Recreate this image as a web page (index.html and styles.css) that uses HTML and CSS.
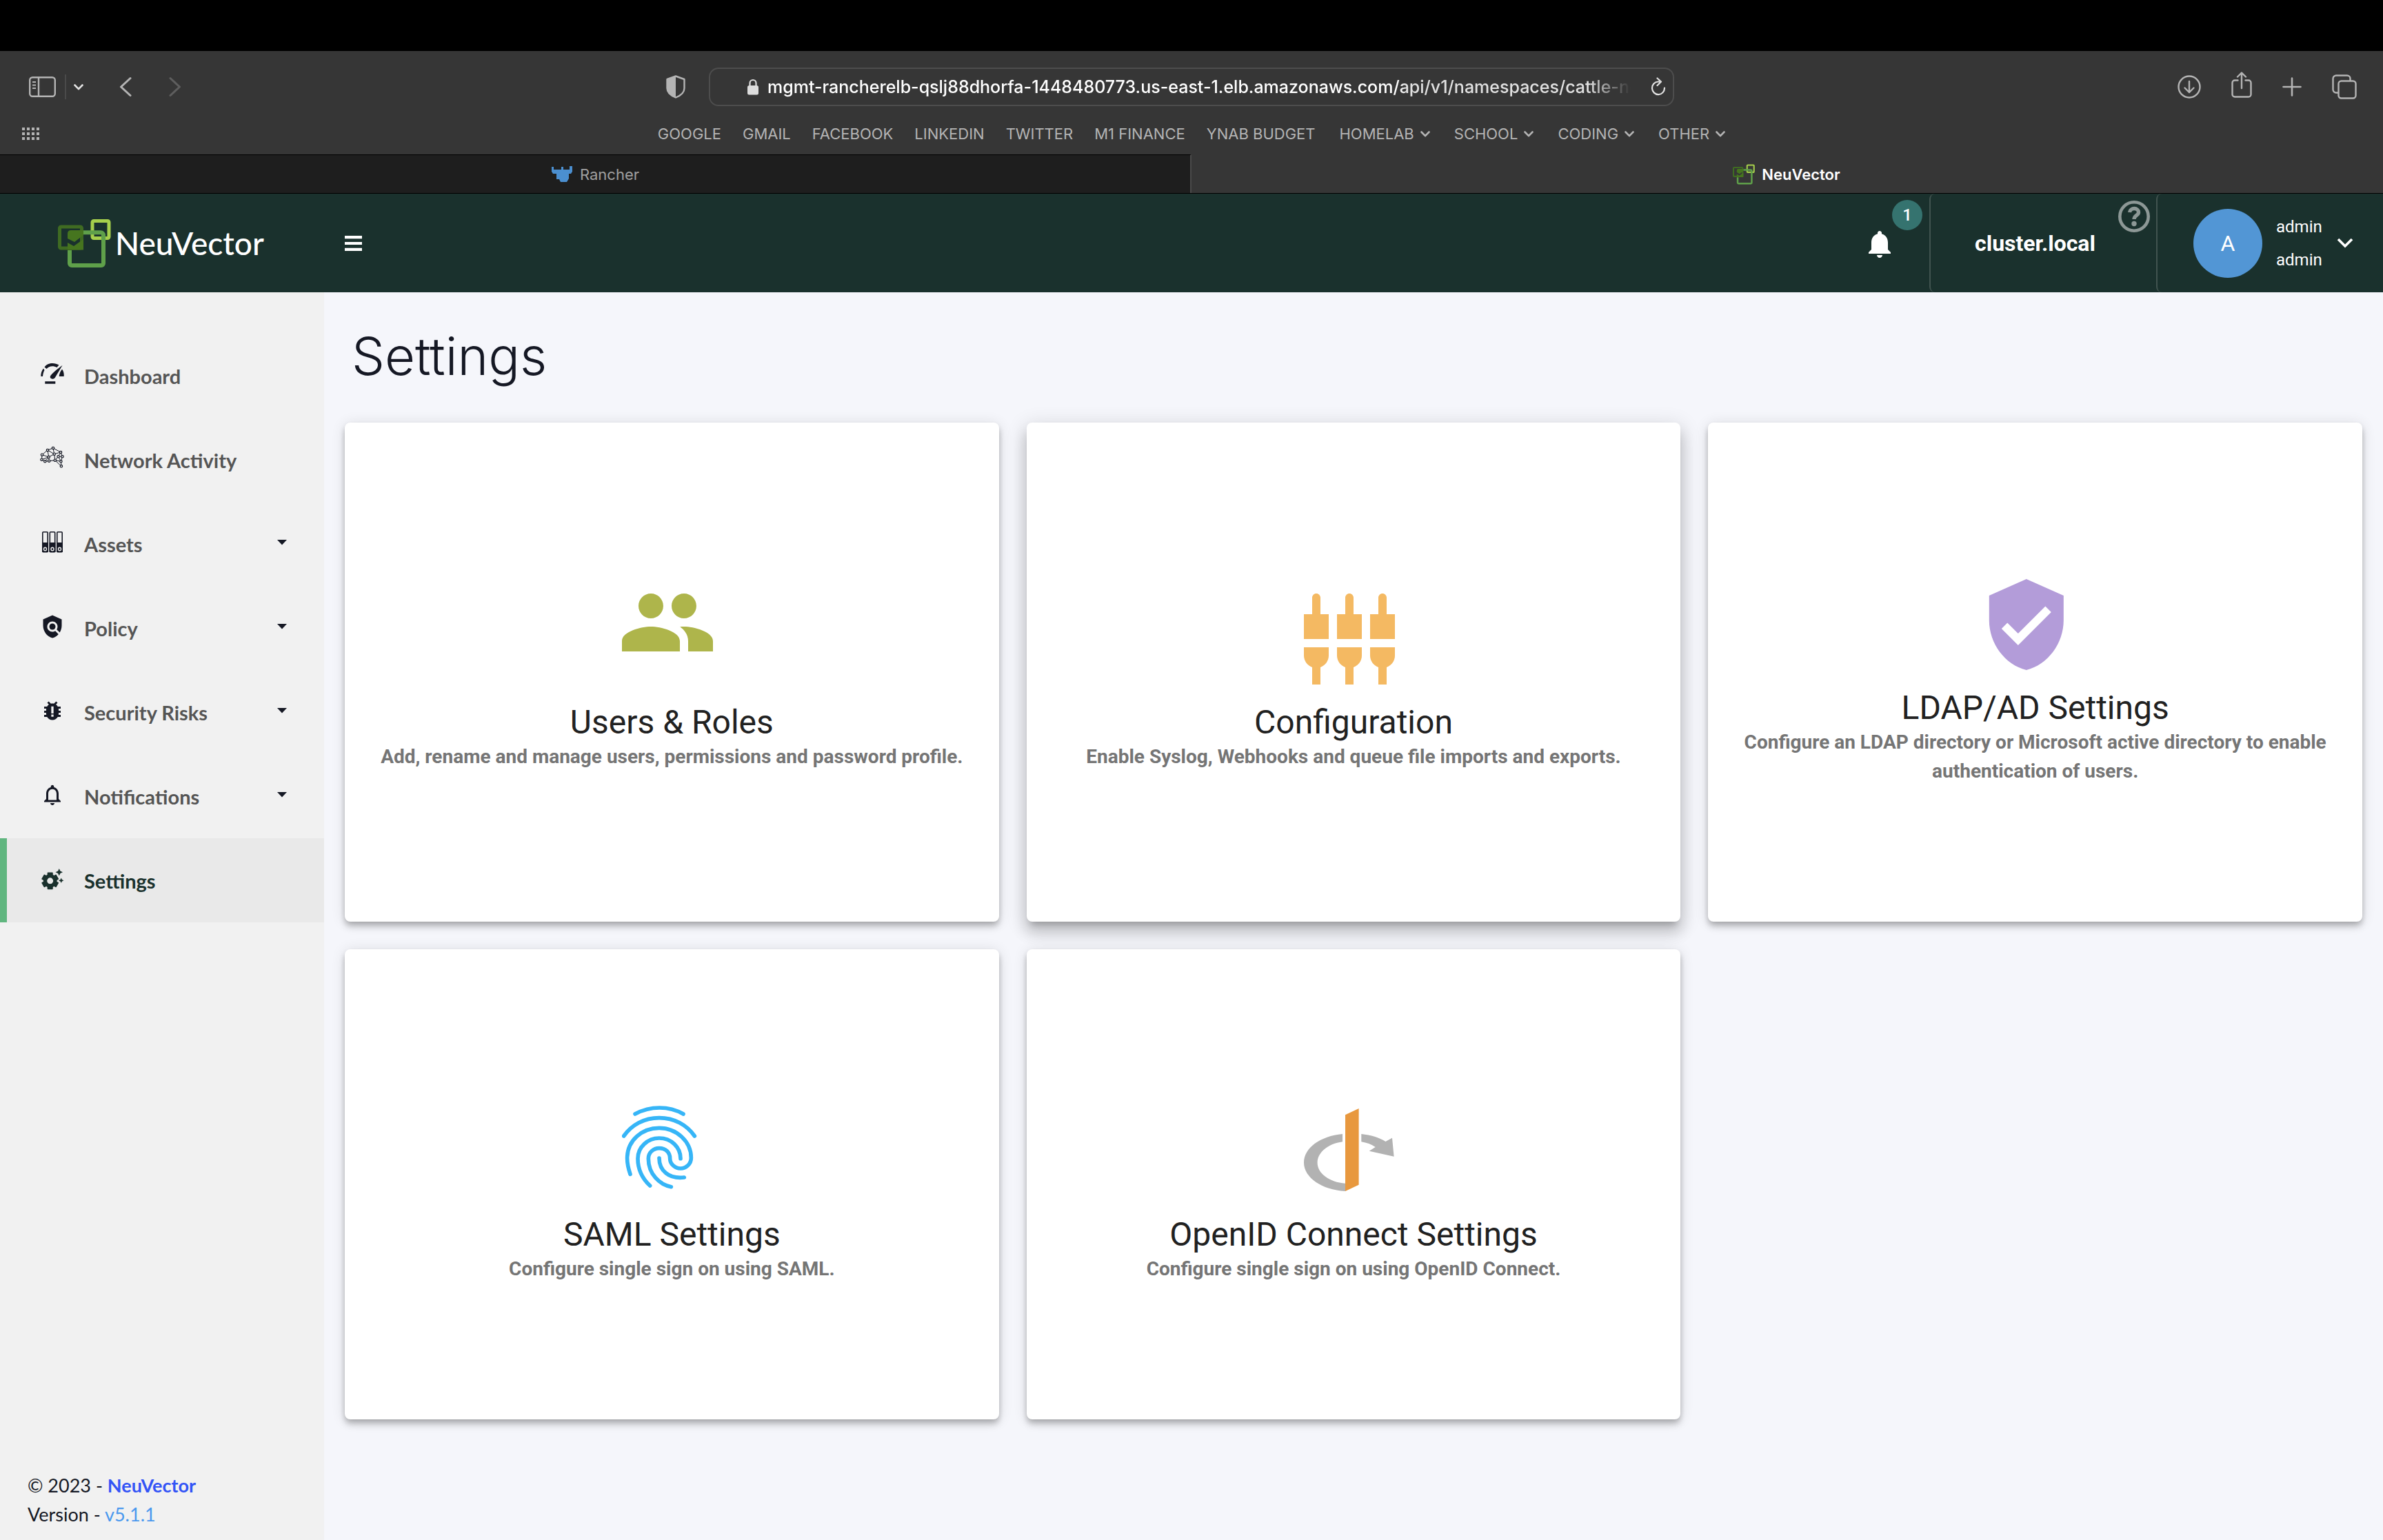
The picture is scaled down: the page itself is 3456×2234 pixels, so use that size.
FILE: index.html
```html
<!DOCTYPE html>
<html lang="en">
<head>
<meta charset="utf-8">
<title>NeuVector</title>
<link rel="stylesheet" href="styles.css">
</head>
<body>
<svg width="0" height="0" class="sprite" aria-hidden="true">
  <symbol id="chev" viewBox="0 0 14 9"><path d="M1.500 1.500 7 7.200l5.500-5.700" fill="none" stroke="currentColor" stroke-width="2.600" stroke-linecap="round" stroke-linejoin="round"/></symbol>
  <symbol id="caret" viewBox="0 0 14 8"><path d="M0 0h14L7 7.500z" fill="currentColor"/></symbol>
  <symbol id="mark" viewBox="0 0 77 70">
    <rect x="50" y="2.500" width="24" height="25" rx="2" fill="none" stroke="#a6cf4c" stroke-width="5"/>
    <rect x="2.500" y="11" width="32" height="31" rx="2" fill="none" stroke="#3f6b22" stroke-width="5"/>
    <path d="M37 19.300h25a4 4 0 0 1 4 4V64a3 3 0 0 1-3 3H20a3 3 0 0 1-3-3V45" fill="none" stroke="#5fa04a" stroke-width="6"/>
    <path d="M14 21q0-5 5-5h18v7L24 33l-10-5zM14 34l9 5 14-10v15.500H14z" fill="#46751f"/>
  </symbol>
</svg>

<div class="menubar"></div>

<div class="browser">
  <div class="toolbar">
    <div class="tools">
      <button class="ghost" aria-label="Sidebar"><svg width="39" height="30" viewBox="0 0 39 30" fill="none" stroke="currentColor"><rect x="1.200" y="1.200" width="36.600" height="27.600" rx="4" stroke-width="2.400"/><path d="M14 1v28" stroke-width="2.400"/><path d="M5 8h5M5 12.500h5M5 17h5" stroke-width="1.800"/></svg></button>
      <span class="rule"></span>
      <button class="ghost bright" aria-label="Tab groups"><svg width="14" height="9"><use href="#chev"/></svg></button>
      <button class="ghost back" aria-label="Back"><svg width="18" height="30" viewBox="0 0 18 30"><path d="M16 2.500 2.500 15 16 27.500" fill="none" stroke="currentColor" stroke-width="3" stroke-linecap="round" stroke-linejoin="round"/></svg></button>
      <button class="ghost forward" aria-label="Forward"><svg width="18" height="30" viewBox="0 0 18 30"><path d="M2 2.500 15.500 15 2 27.500" fill="none" stroke="currentColor" stroke-width="3" stroke-linecap="round" stroke-linejoin="round"/></svg></button>
      <button class="ghost privacy" aria-label="Privacy report"><svg width="28" height="34" viewBox="0 0 28 34"><path d="M14 1.500 26.500 6v13c0 6-5 10.500-12.500 13.500C6.500 29.500 1.500 25 1.500 19V6z" fill="none" stroke="currentColor" stroke-width="2.400" stroke-linejoin="round"/><path d="M14 1.500V32.500C6.500 29.500 1.500 25 1.500 19V6z" fill="currentColor"/></svg></button>
    </div>
    <div class="address">
      <svg width="18" height="24" viewBox="0 0 18 24"><path d="M4.500 11V6.500a4.500 4.500 0 0 1 9 0V11" fill="none" stroke="#ddd" stroke-width="2.200"/><rect x="1" y="10" width="16" height="13.500" rx="2.500" fill="#ddd"/></svg>
      <input type="text" aria-label="Address" value="mgmt-rancherelb-qslj88dhorfa-1448480773.us-east-1.elb.amazonaws.com/api/v1/namespaces/cattle-neuvector-system">
      <button class="ghost bright" aria-label="Reload"><svg width="22" height="28" viewBox="0 0 22 28"><path d="M12 6.500H10.500A9 9.300 0 1 0 20 15.500M9.500 1.500l5.500 5-5.500 5.500" fill="none" stroke="currentColor" stroke-width="2.200" stroke-linecap="round" stroke-linejoin="round"/></svg></button>
    </div>
    <div class="tools tools-end">
      <button class="ghost" aria-label="Downloads"><svg width="34" height="34" viewBox="0 0 34 34" fill="none" stroke="currentColor" stroke-width="2.400" stroke-linecap="round" stroke-linejoin="round"><circle cx="17" cy="17" r="15.500"/><path d="M17 9v16M10.500 18.500 17 25l6.500-6.500"/></svg></button>
      <button class="ghost share" aria-label="Share"><svg width="30" height="38" viewBox="0 0 30 38" fill="none" stroke="currentColor" stroke-width="2.400" stroke-linecap="round" stroke-linejoin="round"><path d="M9.500 12.500H5A3.500 3.500 0 0 0 1.500 16v17A3.500 3.500 0 0 0 5 36.500h20a3.500 3.500 0 0 0 3.500-3.500V16a3.500 3.500 0 0 0-3.500-3.500h-4.500M15 24V2M9 7.500l6-6 6 6"/></svg></button>
      <button class="ghost" aria-label="New tab"><svg width="28" height="28" viewBox="0 0 28 28"><path d="M14 1.500v25M1.500 14h25" stroke="currentColor" stroke-width="2.600" stroke-linecap="round"/></svg></button>
      <button class="ghost" aria-label="Tab overview"><svg width="36" height="36" viewBox="0 0 36 36" fill="none" stroke="currentColor" stroke-width="2.400"><rect x="9.500" y="9.500" width="25" height="25" rx="4"/><path d="M9.500 26.500H6A4.500 4.500 0 0 1 1.500 22V6A4.500 4.500 0 0 1 6 1.500h16A4.500 4.500 0 0 1 26.500 6v3.500"/></svg></button>
    </div>
  </div>
  <div class="favorites">
    <button class="ghost" aria-label="Start page"><svg width="26" height="18" viewBox="0 0 26 18"><path d="M2 0v18M9 0v18M16 0v18M23 0v18" stroke="currentColor" stroke-width="4" stroke-dasharray="4 3"/></svg></button>
    <nav class="bookmarks">
      <a href="#">GOOGLE</a><a href="#">GMAIL</a><a href="#">FACEBOOK</a><a href="#">LINKEDIN</a><a href="#">TWITTER</a><a href="#">M1 FINANCE</a><a href="#">YNAB BUDGET</a>
      <a href="#" class="folder">HOMELAB<svg width="14" height="9"><use href="#chev"/></svg></a>
      <a href="#" class="folder">SCHOOL<svg width="14" height="9"><use href="#chev"/></svg></a>
      <a href="#" class="folder">CODING<svg width="14" height="9"><use href="#chev"/></svg></a>
      <a href="#" class="folder">OTHER<svg width="14" height="9"><use href="#chev"/></svg></a>
    </nav>
  </div>
  <div class="tabs">
    <a href="#" class="tab"><svg width="32" height="26" viewBox="0 0 32 26" fill="#4b8fd0"><path d="M1 2h3v4h11V2h3v4h9V1h4v8l-2 3h-3v7l-3 5h-9l-2-4H8v-8H3L1 9z"/></svg>Rancher</a>
    <a href="#" class="tab tab-on"><svg width="32" height="32"><use href="#mark"/></svg>NeuVector</a>
  </div>
</div>

<header class="appbar">
  <a href="#" class="brand"><svg width="77" height="70"><use href="#mark"/></svg>NeuVector</a>
  <button class="ghost menu" aria-label="Menu"><svg width="25" height="22" viewBox="0 0 25 22"><path d="M0 2.200h25M0 11h25M0 19.800h25" stroke="#fff" stroke-width="4.200"/></svg></button>
  <button class="ghost alerts" aria-label="Alerts"><svg width="48" height="48" viewBox="0 0 24 24" fill="#fff"><path d="M12 22c1.100 0 2-.9 2-2h-4c0 1.100.890 2 2 2zm6-6v-5c0-3.070-1.640-5.640-4.500-6.320V4c0-.830-.670-1.500-1.500-1.500s-1.500.670-1.500 1.500v.680C7.630 5.360 6 7.920 6 11v5l-2 2v1h16v-1l-2-2z"/></svg><span class="badge">1</span></button>
  <div class="cluster">cluster.local</div>
  <button class="ghost help" aria-label="Help"><svg width="46" height="46" viewBox="0 0 46 46" fill="none" stroke="#8d9896"><circle cx="23" cy="23" r="20.700" stroke-width="4.600"/><path d="M16.500 17C17.500 9.500 29.500 10 29.500 17 29.500 21.500 23 21.500 23 27" stroke-width="5.400"/><circle cx="23" cy="33.500" r="3.700" fill="#8d9896" stroke="none"/></svg></button>
  <button class="ghost account"><span class="avatar">A</span><span class="who"><span>admin</span><span>admin</span></span><svg width="24" height="15" viewBox="0 0 24 15"><path d="M2 2l10 10L22 2" fill="none" stroke="#fff" stroke-width="3.600"/></svg></button>
</header>

<div class="shell">
  <aside class="sidebar">
    <nav>
      <a href="#" class="item"><svg width="36" height="36" viewBox="0 0 36 36" fill="currentColor"><path d="M6.500 7.500C11 1 21 .5 27.500 4.500L24.500 8C19 5 13 6 9.500 10zM5 9.500 6.500 12C5 14.500 4.300 18 4 21H1.300C1 17 2.500 12.500 5 9.500zM32 10.500C34.300 13.500 35 17 34.700 21H27.700C28 18 29 15.500 30 13.500zM32.500 5 22 22.500C19.500 26.500 13.500 24.500 15 20.500 16.500 17.500 26 9.500 32.500 5zM7.300 28.300h15v3.400h-15z"/></svg>Dashboard</a>
      <a href="#" class="item"><svg width="36" height="36" viewBox="0 -1 36 36" fill="#f1f1f1" stroke="currentColor"><path fill="none" stroke-width="1" d="M19 2 11 5 3 11.700 2.500 18.700 7.300 21.300 13.200 20.700 21.800 19.700 30.400 21.300 30.900 28.300 21.800 19.700 26.600 14.300 32.500 14.300 30 8 19 2 20.700 10.700 30 8 26.600 14.300 30.400 21.300 32.500 14.300M11 5 20.700 10.700 12.700 15 3 11.700M11 5 12.700 15 2.500 18.700M12.700 15 13.200 20.700M20.700 10.700 21.800 19.700M12.700 15 7.300 21.300"/><g stroke-width="1.200"><circle cx="19" cy="2" r="1.700"/><circle cx="11" cy="5" r="1.700"/><circle cx="30" cy="8" r="1.700"/><circle cx="3" cy="11.700" r="1.700"/><circle cx="20.700" cy="10.700" r="1.700"/><circle cx="12.700" cy="15" r="1.700"/><circle cx="26.600" cy="14.300" r="1.700"/><circle cx="32.500" cy="14.300" r="1.700"/><circle cx="2.500" cy="18.700" r="1.700"/><circle cx="7.300" cy="21.300" r="1.700"/><circle cx="13.200" cy="20.700" r="1.700"/><circle cx="21.800" cy="19.700" r="1.700"/><circle cx="30.400" cy="21.300" r="1.700"/><circle cx="30.900" cy="28.300" r="1.700"/></g></svg>Network Activity</a>
      <a href="#" class="item"><svg width="36" height="36" viewBox="-3 -2 36 36"><g fill="none" stroke="currentColor" stroke-width="1.600"><rect x=".8" y=".8" width="7.400" height="29" rx="1"/><rect x="11.300" y=".8" width="7.400" height="29" rx="1"/><rect x="21.800" y=".8" width="7.400" height="29" rx="1"/></g><path fill="currentColor" d="M0 16h9v14H0zM10.500 16h9v14h-9zM21 16h9v14h-9z"/><g fill="none" stroke="#f1f1f1" stroke-width="1.400"><ellipse cx="4.500" cy="25.500" rx="2" ry="2.300"/><ellipse cx="15" cy="25.500" rx="2" ry="2.300"/><ellipse cx="25.500" cy="25.500" rx="2" ry="2.300"/></g></svg>Assets<svg class="caret" width="14" height="8"><use href="#caret"/></svg></a>
      <a href="#" class="item"><svg width="36" height="36" viewBox="0 0 24 24" fill="currentColor"><path d="M21 5l-9-4-9 4v6c0 5.550 3.840 10.740 9 12 2.300-.560 4.330-1.900 5.880-3.710l-3.120-3.120c-1.940 1.290-4.580 1.070-6.290-.640-1.950-1.950-1.950-5.120 0-7.070 1.950-1.950 5.120-1.950 7.070 0 1.710 1.710 1.920 4.350.640 6.290l2.900 2.900C20.290 15.690 21 13.380 21 11V5z"/><circle cx="12" cy="12" r="3"/></svg>Policy<svg class="caret" width="14" height="8"><use href="#caret"/></svg></a>
      <a href="#" class="item"><svg width="36" height="36" viewBox="0 0 24 24" fill="currentColor"><path d="M20 8h-2.810c-.450-.780-1.070-1.450-1.820-1.960L17 4.410 15.590 3l-2.170 2.170C12.960 5.060 12.490 5 12 5c-.490 0-.960.060-1.410.170L8.410 3 7 4.410l1.620 1.630C7.880 6.550 7.260 7.220 6.810 8H4v2h2.090c-.050.330-.090.660-.090 1v1H4v2h2v1c0 .340.040.670.090 1H4v2h2.810c1.040 1.790 2.970 3 5.190 3s4.150-1.210 5.190-3H20v-2h-2.090c.050-.330.090-.660.090-1v-1h2v-2h-2v-1c0-.340-.040-.670-.090-1H20V8z"/><path fill="#f1f1f1" d="M10.900 7.800h2.200v6.800h-2.200zM10.900 15.700h2.200v2.100h-2.200z"/></svg>Security Risks<svg class="caret" width="14" height="8"><use href="#caret"/></svg></a>
      <a href="#" class="item"><svg width="36" height="36" viewBox="0 0 24 24" fill="currentColor"><path d="M12 22c1.100 0 2-.9 2-2h-4c0 1.100.9 2 2 2zm6-6v-5c0-3.070-1.630-5.640-4.500-6.320V4c0-.830-.670-1.500-1.500-1.500s-1.500.670-1.500 1.500v.680C7.640 5.360 6 7.920 6 11v5l-2 2v1h16v-1l-2-2zm-2 1H8v-6c0-2.480 1.510-4.500 4-4.500s4 2.020 4 4.500v6z"/></svg>Notifications<svg class="caret" width="14" height="8"><use href="#caret"/></svg></a>
      <a href="#" class="item item-on" aria-current="page"><svg width="36" height="36" viewBox="0 0 24 24" fill="currentColor"><path d="M17.410 6.590 15 5.500l2.410-1.090L18.500 2l1.090 2.410L22 5.500l-2.410 1.090L18.500 9zM21.280 12.720 20.500 11l-.780 1.720L18 13.500l1.720.780L20.500 16l.780-1.720L23 13.500z"/><g transform="translate(9.800 13.900)"><rect x="-2.700" y="-8.200" width="5.400" height="5" rx=".6"/><rect x="-2.700" y="3.200" width="5.400" height="5" rx=".6"/><g transform="rotate(60)"><rect x="-2.700" y="-8.200" width="5.400" height="5" rx=".6"/><rect x="-2.700" y="3.200" width="5.400" height="5" rx=".6"/></g><g transform="rotate(120)"><rect x="-2.700" y="-8.200" width="5.400" height="5" rx=".6"/><rect x="-2.700" y="3.200" width="5.400" height="5" rx=".6"/></g><circle r="4.800" fill="none" stroke="currentColor" stroke-width="3.600"/></g></svg>Settings</a>
    </nav>
    <footer class="about">
      <div>© 2023 - <a href="#" class="vendor">NeuVector</a></div>
      <div>Version - <a href="#" class="version">v5.1.1</a></div>
    </footer>
  </aside>

  <main class="content">
    <h1>Settings</h1>
    <div class="cards">
      <a href="#" class="card">
        <svg width="144" height="144" viewBox="1 5 24 24" fill="#aeb54b"><path d="M16 11c1.660 0 2.990-1.340 2.990-3S17.660 5 16 5c-1.660 0-3 1.340-3 3s1.340 3 3 3zm-8 0c1.660 0 2.990-1.340 2.990-3S9.660 5 8 5C6.340 5 5 6.340 5 8s1.340 3 3 3zm0 2c-2.330 0-7 1.170-7 3.500V19h14v-2.500c0-2.330-4.670-3.500-7-3.500zm8 0c-.290 0-.620.020-.970.050 1.160.840 1.970 1.970 1.970 3.450V19h6v-2.500c0-2.330-4.670-3.500-7-3.500z"/></svg>
        <h2>Users &amp; Roles</h2>
        <p>Add, rename and manage users, permissions and password profile.</p>
      </a>
      <a href="#" class="card card-raised">
        <svg width="144" height="144" viewBox="1 1 24 24" fill="#f4b962"><path d="M5 2c0-.550-.450-1-1-1s-1 .450-1 1v4H1v6h6V6H5V2zm4 14c0 1.300.840 2.400 2 2.820V23h2v-4.180c1.160-.410 2-1.510 2-2.820v-2H9v2zm-8 0c0 1.300.840 2.400 2 2.820V23h2v-4.180C6.160 18.400 7 17.300 7 16v-2H1v2zM21 6V2c0-.550-.450-1-1-1s-1 .450-1 1v4h-2v6h6V6h-2zm-8-4c0-.550-.450-1-1-1s-1 .450-1 1v4H9v6h6V6h-2V2zm4 14c0 1.300.840 2.400 2 2.820V23h2v-4.180c1.160-.410 2-1.510 2-2.820v-2h-6v2z"/></svg>
        <h2>Configuration</h2>
        <p>Enable Syslog, Webhooks and queue file imports and exports.</p>
      </a>
      <a href="#" class="card">
        <svg width="144" height="144" viewBox="2.200 1 24 24" fill="#b39cd9"><path d="M12 1L3 5v6c0 5.550 3.840 10.740 9 12 5.160-1.260 9-6.450 9-12V5l-9-4zm-2 16l-4-4 1.410-1.410L10 14.170l6.590-6.590L18 9l-8 8z"/></svg>
        <h2>LDAP/AD Settings</h2>
        <p>Configure an LDAP directory or Microsoft active directory to enable authentication of users.</p>
      </a>
      <a href="#" class="card">
        <svg width="144" height="144" viewBox="126 98 432 432" fill="none" stroke="#36b5f7" stroke-width="17" stroke-linecap="round"><path d="M183 134C250 98 330 98 393 134M134 230C168 182 222 151 288 151S408 182 442 230M162 396C150 360 148 340 149 320 152 250 212 195 288 195 365 195 427 255 427 325 427 350 406 371 381 371 355 371 335 350 335 328 335 300 315 283 288 283 262 283 241 303 241 328 241 395 290 442 340 451M248 446C215 415 195 375 195 328 195 278 238 239 288 239 340 239 381 278 381 328M288 326C288 380 330 418 397 410"/></svg>
        <h2>SAML Settings</h2>
        <p>Configure single sign on using SAML.</p>
      </a>
      <a href="#" class="card">
        <svg width="144" height="144" viewBox="251 33 144 144"><path fill="#b2b2b2" d="M307 74C275 77 251 94 251 115.700 251 137 277 155 311 157V145.700C288 144 270.600 131 270.600 115.700 270.600 101 286 88 307 85.300zM334.300 74C348 75.500 360 79 369.400 85L379 79.700 381.600 106.700 345.700 98.700 354.700 93C349 89 342 86.500 334.300 85.300z"/><path fill="#e8983e" d="M311 46.300 330.600 37V147.700L311 157z"/></svg>
        <h2>OpenID Connect Settings</h2>
        <p>Configure single sign on using OpenID Connect.</p>
      </a>
    </div>
  </main>
</div>
</body>
</html>
```

FILE: styles.css
```css
* { box-sizing: border-box; }

body {
  margin: 0;
  min-height: 100vh;
  display: flex;
  flex-direction: column;
  font-family: Roboto, sans-serif;
  background: #f5f6fb;
  color: #151824;
}

a { color: inherit; text-decoration: none; }
svg { display: block; flex: none; }
.sprite { position: absolute; }

.ghost {
  display: flex;
  align-items: center;
  padding: 0;
  border: 0;
  background: none;
  color: inherit;
  font: inherit;
}

/* Browser window */
.menubar { height: 74px; background: #000; }

.browser {
  background: #363636;
  color: #b4b4b4;
  font-family: Inter, sans-serif;
  font-size: 22px;
}

.toolbar {
  display: grid;
  grid-template-columns: 1fr minmax(0, 1400px) 1fr;
  align-items: center;
  height: 104px;
}

.tools { display: flex; align-items: center; padding: 0 34px 0 42px; }
.tools-end { justify-content: flex-end; gap: 44px; padding: 0 38px; }
.share { padding-bottom: 6px; }
.rule { width: 2px; height: 36px; margin: 0 11px 0 13px; background: #4a4a4a; }
.bright { color: #e2e2e2; }
.back { margin-left: 52px; }
.forward { margin-left: 54px; color: #5e5e5e; }
.privacy { margin-left: auto; }

.address {
  display: flex;
  align-items: center;
  height: 56px;
  padding: 0 10px 0 53px;
  border: 2px solid #4d4d4d;
  border-radius: 14px;
}

.address input {
  flex: 1;
  min-width: 0;
  margin: 0 29px 0 12px;
  padding: 0;
  border: 0;
  outline: 0;
  background: none;
  color: #fff;
  font: 500 25px/32px Inter, sans-serif;
  -webkit-mask-image: linear-gradient(90deg, #000 73%, rgba(0, 0, 0, .85) 74%, rgba(0, 0, 0, .85) 95%, transparent);
  mask-image: linear-gradient(90deg, #000 73%, rgba(0, 0, 0, .85) 74%, rgba(0, 0, 0, .85) 95%, transparent);
}

.favorites {
  display: grid;
  grid-template-columns: 1fr auto 1fr;
  align-items: center;
  height: 46px;
  padding: 0 32px 14px;
}

.bookmarks { display: flex; gap: 31px; }
.folder { display: flex; align-items: center; gap: 9px; margin-left: 4px; }

.tabs {
  display: grid;
  grid-template-columns: 1fr 1fr;
  height: 57px;
  border-bottom: 1px solid #000;
}

.tab {
  display: flex;
  align-items: center;
  justify-content: center;
  gap: 10px;
  border-top: 1px solid #000;
  border-right: 2px solid #4a4a4a;
  background: #1e1e1e;
  color: #a0a0a0;
}

.tab-on {
  border-color: #363636;
  background: #363636;
  color: #fff;
  font-weight: 600;
}

/* Application bar */
.appbar {
  display: flex;
  align-items: stretch;
  height: 143px;
  background: #1a312d;
  color: #fff;
}

.brand {
  display: flex;
  align-items: center;
  gap: 6px;
  width: 500px;
  padding-left: 84px;
  font: 500 46px/52px Lato, sans-serif;
}

.alerts { position: relative; margin-left: auto; margin-right: 48px; padding-top: 3px; }
.badge {
  position: absolute;
  left: 42px;
  top: 9px;
  width: 44px;
  border-radius: 50%;
  background: #35736f;
  font-size: 24px;
  font-weight: 500;
  line-height: 44px;
  text-align: center;
}

.cluster {
  display: flex;
  align-items: center;
  width: 273px;
  padding-left: 64px;
  border-left: 2px solid #41534f;
  border-radius: 8px;
  font-size: 32px;
  font-weight: 700;
}

.help { align-items: flex-start; width: 56px; padding: 10px 0 0 1px; }

.account {
  width: 329px;
  padding-left: 52px;
  border-left: 2px solid #41534f;
  border-radius: 8px;
}

.avatar {
  width: 100px;
  border-radius: 50%;
  background: #5296d5;
  font-size: 32px;
  line-height: 100px;
  text-align: center;
}

.who {
  display: grid;
  margin: 0 21px 0 20px;
  font-size: 24px;
  line-height: 48px;
}

/* Page */
.shell { display: flex; flex: 1; }

.sidebar {
  display: flex;
  flex-direction: column;
  flex: none;
  width: 470px;
  padding: 60px 0 16px;
  background: #f1f1f1;
  font-family: Lato, sans-serif;
  font-size: 28px;
}

.item {
  display: flex;
  align-items: center;
  gap: 28px;
  height: 122px;
  padding: 0 54px 0 48px;
  border-left: 10px solid transparent;
  color: #555;
  font-size: 29px;
  font-weight: 700;
}

.item svg { margin-bottom: 4px; color: #151824; }
.item .caret { margin-left: auto; }

.item-on { border-color: #60b67f; background: #e9e9e9; }
.item-on, .item-on svg { color: #1a312d; }

.about {
  margin-top: auto;
  padding-left: 40px;
  font-size: 27px;
  line-height: 42px;
}
.vendor { color: #3354f6; font-weight: 700; }
.version { color: #4a98ee; }

.content { flex: 1; min-width: 0; padding: 42px 30px; }

h1 {
  margin: 0 0 47px;
  padding-left: 10px;
  font: 300 76px/100px Inter, sans-serif;
}

.cards {
  display: grid;
  grid-template-columns: repeat(3, 1fr);
  gap: 40px;
}

.card {
  display: flex;
  flex-direction: column;
  align-items: center;
  justify-content: center;
  padding: 197px 40px;
  border-radius: 8px;
  background: #fff;
  box-shadow: 0 4px 8px -2px rgba(0, 0, 0, .2), 0 8px 10px rgba(0, 0, 0, .14), 0 2px 20px rgba(0, 0, 0, .12);
  text-align: center;
}

.card-raised {
  box-shadow: 0 10px 10px -6px rgba(0, 0, 0, .2), 0 16px 20px 2px rgba(0, 0, 0, .14), 0 6px 28px 4px rgba(0, 0, 0, .12);
}

.card svg { margin: 30px 0 14px; }

h2 {
  margin: 0;
  color: #212121;
  font-size: 48px;
  font-weight: 400;
  line-height: 58px;
}

.card p {
  margin: 0;
  color: #757575;
  font-size: 28px;
  font-weight: 700;
  line-height: 42px;
}
```
